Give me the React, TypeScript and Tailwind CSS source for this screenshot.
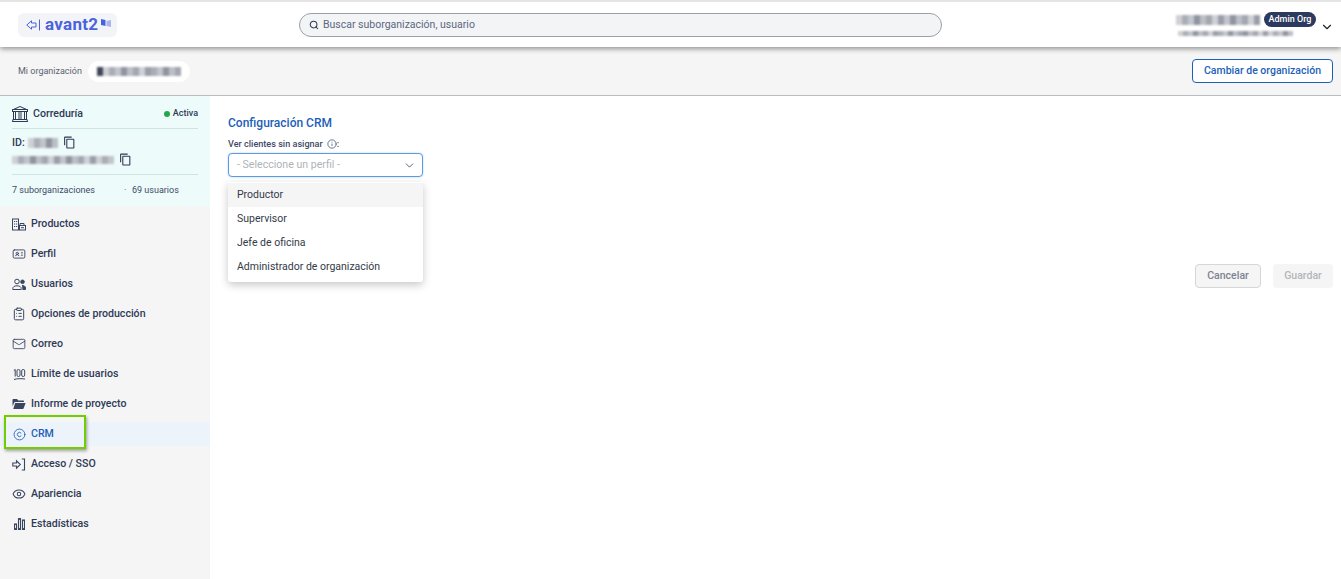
import React from "react";
import { Search, ChevronDown, Info, IdCard, Mail, ClipboardList, Copyright, Eye } from "lucide-react";
import { BsBank } from "react-icons/bs";
import { MdOutlineContentCopy } from "react-icons/md";

const font = "font-['Roboto',sans-serif]";

// pixelated placeholders for the blurred-out names in the screenshot
const Mosaic = ({ colors, h, w = "w-[6px]" }: { colors: string[]; h: string; w?: string }) => (
  <div className={`flex ${h} blur-[1px]`}>
    {colors.map((c, i) => (
      <span key={i} className={`${w} h-full`} style={{ backgroundColor: c }} />
    ))}
  </div>
);

const ProductsIcon = () => (
  <svg width="14" height="13" viewBox="0 0 14 13" fill="none" stroke="#3a4560" strokeWidth="1">
    <rect x="0.5" y="1" width="6" height="11" />
    <path d="M2 3.5H3.2M4 3.5H5.2M2 6H3.2M4 6H5.2M2 8.5H3.2M4 8.5H5.2" />
    <path d="M8 7V5.5H12V7" />
    <rect x="7.5" y="7.5" width="6" height="4.5" />
    <path d="M9 9.7H12" />
  </svg>
);

const UsersIcon = () => (
  <svg width="14" height="13" viewBox="0 0 14 13" fill="none" stroke="#3a4560" strokeWidth="1">
    <circle cx="5" cy="3.5" r="2.3" />
    <path d="M0.8 11.5V10.5C0.8 8.8 2.5 7.8 5 7.8 7.5 7.8 9.2 8.8 9.2 10.5V11.5Z" />
    <circle cx="10.5" cy="3.8" r="1.8" fill="#3a4560" />
    <path d="M10 7.5C12 7.4 13.5 8.3 13.5 10V11.5H10.5" fill="#3a4560" />
  </svg>
);

const FolderIcon = () => (
  <svg width="14" height="12" viewBox="0 0 14 12" fill="#3a4560">
    <path d="M0.5 2C0.5 1.4 0.9 1 1.5 1H5L6.3 2.5H11C11.6 2.5 12 2.9 12 3.5V4H3.3C2.7 4 2.3 4.3 2 4.9L0.5 8.5Z" />
    <path d="M3.2 5H13.6L11.6 10.5C11.5 10.8 11.2 11 10.8 11H1.2Z" />
  </svg>
);

const AccessIcon = () => (
  <svg width="14" height="13" viewBox="0 0 14 13" fill="none" stroke="#3a4560" strokeWidth="1.1">
    <path d="M0.8 5H4.5V2.8L8.3 6.5 4.5 10.2V8H0.8Z" />
    <path d="M9.8 1H12.5V12H9.8" />
  </svg>
);

const StatsIcon = () => (
  <svg width="11" height="12" viewBox="0 0 11 12" fill="none" stroke="#3a4560" strokeWidth="1.1">
    <rect x="0.5" y="6" width="2" height="5.5" />
    <rect x="4.5" y="0.6" width="2" height="10.9" />
    <rect x="8.5" y="2" width="2" height="9.5" />
  </svg>
);

const HundredIcon = () => (
  <svg width="13" height="13" viewBox="0 0 13 13" fill="none" stroke="#3a4560" strokeWidth="1">
    <path d="M0.8 2.5 2.2 1.5V8.5" />
    <rect x="4" y="1.5" width="3" height="7" rx="1.4" />
    <rect x="8.7" y="1.5" width="3" height="7" rx="1.4" />
    <path d="M1 11.5C4 10.5 8 10.5 12 11" />
  </svg>
);

const nav = [
  { label: "Productos", icon: <ProductsIcon /> },
  { label: "Perfil", icon: <IdCard size={14} strokeWidth={1.6} color="#3a4560" /> },
  { label: "Usuarios", icon: <UsersIcon /> },
  { label: "Opciones de producción", icon: <ClipboardList size={14} strokeWidth={1.7} color="#3a4560" /> },
  { label: "Correo", icon: <Mail size={14} strokeWidth={1.5} color="#3a4560" /> },
  { label: "Límite de usuarios", icon: <HundredIcon /> },
  { label: "Informe de proyecto", icon: <FolderIcon /> },
  { label: "CRM", icon: <Copyright size={13} strokeWidth={1.6} color="#1d5fb8" />, active: true },
  { label: "Acceso / SSO", icon: <AccessIcon /> },
  { label: "Apariencia", icon: <Eye size={14} strokeWidth={1.8} color="#3a4560" /> },
  { label: "Estadísticas", icon: <StatsIcon /> },
];

const options = ["Productor", "Supervisor", "Jefe de oficina", "Administrador de organización"];

const gray = ["#d0d0d4", "#a9adb6", "#c2c5cb", "#8f949f", "#bcbfc6", "#a3a7b0", "#cfd1d6", "#9a9ea8"];

export default function App() {
  return (
    <div className={`${font} relative w-[1341px] h-[579px] overflow-hidden bg-white text-[#2f3a55]`}>
      <header className="relative z-10 h-[47px] flex items-center border-t-2 border-[#e4e4e4] bg-white shadow-[0_2px_5px_rgba(0,0,0,0.4)]">
        <div className="w-[299px] pl-[18px]">
          <div className="w-[99px] h-[24px] rounded-md bg-[#f3f4f8] flex items-center pl-[8px] gap-[4px]">
            <svg width="15" height="12" viewBox="0 0 15 12" fill="none" stroke="#4a63dc" strokeWidth="1">
              <path d="M0.8 6 5.5 1.8V4H10V8H5.5V10.2Z" />
              <path d="M13.5 0.5V11.5" />
            </svg>
            <span className="text-[17px] leading-none font-bold text-[#4a63dc] tracking-[0.3px]">avant2</span>
            <svg width="11" height="9" viewBox="0 0 11 9" className="-mt-[3px] -ml-[1px]">
              <path d="M0 0 4.5 1V7L0 6Z" fill="#4a63dc" />
              <path d="M5.5 2 10 1V8L5.5 7Z" fill="#aab5ee" />
            </svg>
          </div>
        </div>
        <div className="w-[643px] h-[24px] rounded-full border border-[#9a9fa8] bg-[#f3f4f6] flex items-center pl-[9px] gap-[4px]">
          <Search size={10} strokeWidth={2.5} color="#2f3a55" />
          <span className="text-[10.5px] text-[#5b6780]">Buscar suborganización, usuario</span>
        </div>
        <div className="flex-1 flex justify-end items-start pr-[7px]">
          <div className="flex flex-col gap-[4px] -mt-[1px]">
            <div className="flex items-center gap-[4px]">
              <Mosaic colors={gray.concat(gray.slice(2))} h="h-[10px]" />
              <span className="h-[15px] w-[52px] text-center rounded-full bg-[#2c3a5e] text-white text-[9px] font-medium leading-[15px]">Admin Org</span>
            </div>
            <div className="ml-[2px]">
              <Mosaic colors={gray.concat(gray.slice(1, 6)).concat(gray.slice(3)).concat(gray.slice(0, 5))} h="h-[5px]" w="w-[5px]" />
            </div>
          </div>
          <ChevronDown size={14} strokeWidth={2} color="#1f2533" className="ml-[4px] mt-[7px]" />
        </div>
      </header>

      <div className="h-[49px] flex items-center justify-between bg-[#f5f5f5] border-b border-[#b9bcc0] pl-[18px] pr-[8px]">
        <div className="flex items-center gap-[6px]">
          <span className="text-[9px] text-[#5b6270] mt-[1px]">Mi organización</span>
          <div className="w-[102px] h-[21px] rounded-full bg-white flex items-center pl-[9px]">
            <Mosaic colors={["#3f4757"].concat(gray, gray.slice(1, 6))} h="h-[9px]" />
          </div>
        </div>
        <button className="w-[141px] h-[24px] rounded-[4px] border border-[#1d5fb8] text-[#1d5fb8] bg-white text-[10.5px] font-medium">
          Cambiar de organización
        </button>
      </div>

      <div className="flex h-[483px]">
        <aside className="w-[210px] h-full bg-[#f5f5f5] shrink-0">
          <div className="h-[110px] bg-[#eefbfb] px-[12px]">
            <div className="h-[33px] pt-[3px] flex items-center justify-between border-b border-[#cfe5e4]">
              <div className="flex items-center gap-[5px]">
                <BsBank size={16} color="#2f3a55" />
                <span className="text-[10.6px] font-medium">Correduría</span>
              </div>
              <div className="flex items-center gap-[3px]">
                <span className="w-[6px] h-[6px] rounded-full bg-[#22a84a]" />
                <span className="text-[9px] font-medium">Activa</span>
              </div>
            </div>
            <div className="h-[46px] border-b border-[#cfe5e4] pt-[6px]">
              <div className="flex items-center h-[15px] text-[10.6px] font-medium">
                ID:
                <span className="ml-[3px]">
                  <Mosaic colors={gray.slice(0, 5)} h="h-[10px]" />
                </span>
                <MdOutlineContentCopy size={13} className="ml-[5px]" />
              </div>
              <div className="flex items-center h-[15px] mt-[2px]">
                <Mosaic colors={gray.concat(gray.slice(2, 8)).concat(gray.slice(0, 3))} h="h-[8px]" />
                <MdOutlineContentCopy size={13} className="ml-[5px]" />
              </div>
            </div>
            <div className="h-[30px] pt-[1px] flex items-center text-[9px] text-[#3f4a66]">
              <span className="w-[112px]">7 suborganizaciones</span>
              <span className="w-[8px]">·</span>
              <span>69 usuarios</span>
            </div>
          </div>
          <nav className="pt-[3px]">
            {nav.map((item) => (
              <div key={item.label} className="h-[30px] py-[3px]">
                <div
                  className={`h-[24px] pl-[12px] flex items-center gap-[5px] text-[10.6px] font-medium ${
                    item.active ? "bg-[#edf3fb] text-[#1d5fb8]" : ""
                  }`}
                >
                  <span className="w-[14px] flex justify-center">{item.icon}</span>
                  {item.label}
                </div>
              </div>
            ))}
          </nav>
        </aside>

        <main className="flex-1 pl-[18px] pr-[8px] pt-[20px]">
          <h1 className="text-[12px] leading-[15px] font-medium text-[#1d5fb8]">Configuración CRM</h1>
          <div className="mt-[7px] flex items-center text-[9.1px] leading-[12px] font-medium text-[#3f4a66]">
            Ver clientes sin asignar
            <Info size={10} strokeWidth={1.8} className="ml-[4px]" />:
          </div>
          <div className="relative mt-[3px] w-[195px]">
            <div className="h-[24px] rounded-[4px] border border-[#5d9be0] bg-white flex items-center justify-between pl-[8px] pr-[6px] shadow-[0_0_2px_rgba(93,155,224,0.5)]">
              <span className="text-[10.6px] text-[#b0b3b8]">- Seleccione un perfil -</span>
              <ChevronDown size={13} strokeWidth={1.6} color="#3f4a66" />
            </div>
            <ul className="absolute top-[29px] left-0 w-[195px] pt-[1px] pb-[3px] bg-white shadow-[0_3px_9px_rgba(0,0,0,0.22)] rounded-b-[3px] text-[10.5px] text-[#333a48]">
              {options.map((o, i) => (
                <li key={o} className={`h-[24px] flex items-center pl-[9px] ${i === 0 ? "bg-[#f5f5f5]" : ""}`}>
                  {o}
                </li>
              ))}
            </ul>
          </div>
          <div className="mt-[87px] flex justify-end gap-[12px]">
            <button className="w-[66px] h-[24px] rounded-[4px] border border-[#d5d6d8] bg-[#f5f5f5] text-[#7c8391] text-[10.5px] font-medium">
              Cancelar
            </button>
            <button className="w-[60px] h-[24px] rounded-[4px] bg-[#f5f5f5] text-[#b3b6bb] text-[10.5px] font-medium">
              Guardar
            </button>
          </div>
        </main>
      </div>

      {/* green annotation box drawn over the CRM entry */}
      <div className="absolute left-[4px] top-[415px] w-[82px] h-[34px] border-2 border-[#6fce00] shadow-[1px_2px_3px_rgba(0,0,0,0.35)]" />
    </div>
  );
}
